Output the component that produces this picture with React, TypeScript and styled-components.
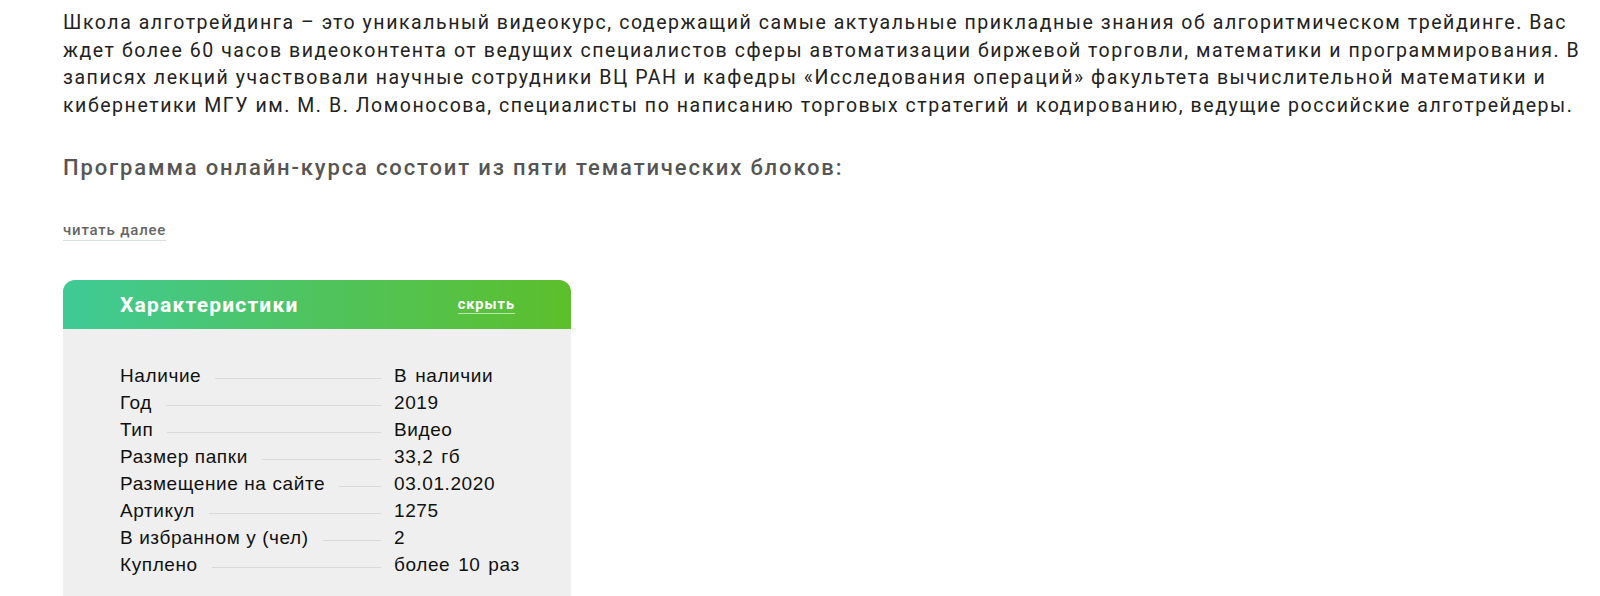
import styled, { createGlobalStyle } from "styled-components";

const GlobalStyle = createGlobalStyle`
  body {
    margin: 0;
    background: #fff;
    font-family: Roboto, "Liberation Sans", sans-serif;
  }
`;

const Page = styled.div`
  padding: 9px 7px 0 63px;
`;

const Intro = styled.p`
  margin: 0;
  font-size: 19.5px;
  line-height: 27.5px;
  letter-spacing: 1.55px;
  color: #222;
`;

const Subtitle = styled.h3`
  margin: 34px 0 0;
  font-size: 22px;
  line-height: 30px;
  letter-spacing: 1.85px;
  font-weight: 500;
  color: #555;
`;

const MoreLink = styled.a`
  display: block;
  width: fit-content;
  margin-top: 37px;
  font-size: 15px;
  line-height: 20px;
  letter-spacing: 0.8px;
  font-weight: 500;
  color: #666;
  text-decoration: none;
  border-bottom: 1px solid #d4e0df;
  cursor: pointer;
`;

const Card = styled.section`
  margin-top: 39px;
  width: 508px;
  border-radius: 12px 12px 0 0;
  overflow: hidden;
  background: #efefef;
  padding-bottom: 40px;
`;

const CardHeader = styled.header`
  height: 49px;
  display: flex;
  align-items: center;
  justify-content: space-between;
  padding: 0 56px 0 57px;
  background: linear-gradient(90deg, #3fca96 0%, #4fc45e 50%, #5cbf2b 100%);
`;

const CardTitle = styled.h2`
  margin: 0;
  font-size: 21px;
  letter-spacing: 1.2px;
  font-weight: 700;
  color: #fff;
`;

const HideLink = styled.a`
  font-size: 14.5px;
  line-height: 17px;
  letter-spacing: 1px;
  font-weight: 700;
  color: #fff;
  border-bottom: 1px solid rgba(255, 255, 255, 0.6);
  cursor: pointer;
`;

const Specs = styled.dl`
  margin: 0;
  padding: 33px 0 0 57px;
  font-family: "Liberation Sans", Arial, sans-serif;
  font-size: 19px;
  line-height: 27px;
  letter-spacing: 0.6px;
  color: #111;
`;

const SpecRow = styled.div`
  display: grid;
  grid-template-columns: 261px auto;
  column-gap: 13px;
`;

const SpecLabel = styled.dt`
  display: flex;
  align-items: baseline;
  gap: 14px;
  white-space: nowrap;
  &::after {
    content: "";
    flex: 1;
    border-bottom: 1px solid #d9d9d9;
    transform: translateY(-3px);
  }
`;

const SpecValue = styled.dd`
  margin: 0;
  word-spacing: 2px;
`;

const specs: [string, string][] = [
  ["Наличие", "В наличии"],
  ["Год", "2019"],
  ["Тип", "Видео"],
  ["Размер папки", "33,2 гб"],
  ["Размещение на сайте", "03.01.2020"],
  ["Артикул", "1275"],
  ["В избранном у (чел)", "2"],
  ["Куплено", "более 10 раз"],
];

const App = () => (
  <Page>
    <GlobalStyle />
    <Intro>
      Школа алготрейдинга – это уникальный видеокурс, содержащий самые актуальные прикладные
      знания об алгоритмическом трейдинге. Вас ждет более 60 часов видеоконтента от ведущих
      специалистов сферы автоматизации биржевой торговли, математики и программирования. В
      записях лекций участвовали научные сотрудники ВЦ РАН и кафедры «Исследования операций»
      факультета вычислительной математики и кибернетики МГУ им. М. В. Ломоносова, специалисты
      по написанию торговых стратегий и кодированию, ведущие российские алготрейдеры.
    </Intro>
    <Subtitle>Программа онлайн-курса состоит из пяти тематических блоков:</Subtitle>
    <MoreLink>читать далее</MoreLink>
    <Card>
      <CardHeader>
        <CardTitle>Характеристики</CardTitle>
        <HideLink>скрыть</HideLink>
      </CardHeader>
      <Specs>
        {specs.map(([label, value]) => (
          <SpecRow key={label}>
            <SpecLabel>{label}</SpecLabel>
            <SpecValue>{value}</SpecValue>
          </SpecRow>
        ))}
      </Specs>
    </Card>
  </Page>
);

export default App;
